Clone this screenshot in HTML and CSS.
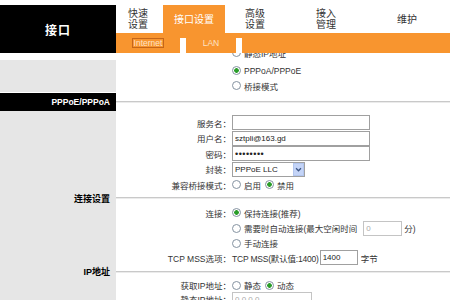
FILE: index.html
```html
<!DOCTYPE html>
<html lang="zh-CN">
<head>
<meta charset="utf-8">
<title>接口设置</title>
<link rel="stylesheet" href="styles.css">
</head>
<body>
<header class="top">
  <div class="brand">接口</div>
  <nav class="nav">
    <div class="tabs">
      <a class="tab t1">快速<br>设置</a>
      <a class="tab t2">接口设置</a>
      <a class="tab t3">高级<br>设置</a>
      <a class="tab t4">接入<br>管理</a>
      <a class="tab t5">维护</a>
    </div>
    <div class="subnav">
      <a class="sub sub-internet"><span class="sub-box">Internet</span></a>
      <span class="sep"></span>
      <a class="sub sub-lan">LAN</a>
      <span class="sep"></span>
    </div>
  </nav>
</header>
<main class="form">
  <div class="side side-top"></div>
  <div class="body body0">
    <div class="row"><span class="lbl"></span><label class="fld"><input class="radio" type="radio" name="wan">静态IP地址</label></div>
    <div class="row"><span class="lbl"></span><label class="fld"><input class="radio" type="radio" name="wan" checked>PPPoA/PPPoE</label></div>
    <div class="row"><span class="lbl"></span><label class="fld"><input class="radio" type="radio" name="wan">桥接模式</label></div>
  </div>

  <div class="side title title-dark">PPPoE/PPPoA</div>
  <div class="rule"><hr></div>

  <div class="side"></div>
  <div class="body body1">
    <div class="row tall"><span class="lbl">服务名：</span><span class="fld"><input class="txt w-long" type="text" value=""></span></div>
    <div class="row tall"><span class="lbl">用户名：</span><span class="fld"><input class="txt w-long" type="text" value="sztpli@163.gd"></span></div>
    <div class="row tall"><span class="lbl">密码：</span><span class="fld"><input class="txt w-long pwd" type="password" value="12345678"></span></div>
    <div class="row tall"><span class="lbl">封装：</span><span class="fld"><span class="select"><span class="select-val">PPPoE LLC</span><span class="select-btn"><svg viewBox="0 0 8 8" width="7" height="7"><path d="M1.2 2.6 L4 5.4 L6.8 2.6" fill="none" stroke="#3d5584" stroke-width="1.5"/></svg></span></span></span></div>
    <div class="row"><span class="lbl">兼容桥接模式：</span><span class="fld"><label class="opt"><input class="radio" type="radio" name="bridge">启用</label><label class="opt"><input class="radio" type="radio" name="bridge" checked>禁用</label></span></div>
  </div>

  <div class="side title">连接设置</div>
  <div class="rule"><hr></div>

  <div class="side"></div>
  <div class="body body2">
    <div class="row"><span class="lbl">连接：</span><label class="fld"><input class="radio" type="radio" name="conn" checked>保持连接(推荐)</label></div>
    <div class="row r16"><span class="lbl"></span><span class="fld"><label class="opt"><input class="radio" type="radio" name="conn">需要时自动连接(最大空闲时间</label><input class="txt w-idle" type="text" value="0"><span class="unit">分)</span></span></div>
    <div class="row r14"><span class="lbl"></span><label class="fld"><input class="radio" type="radio" name="conn">手动连接</label></div>
    <div class="row"><span class="lbl">TCP MSS选项：</span><span class="fld"><span class="mss">TCP MSS(默认值:1400)</span><input class="txt w-mss" type="text" value="1400"><span class="unit wide">字节</span></span></div>
  </div>

  <div class="side title">IP地址</div>
  <div class="rule"><hr></div>

  <div class="side"></div>
  <div class="body body3">
    <div class="row r14"><span class="lbl">获取IP地址：</span><span class="fld"><label class="opt"><input class="radio" type="radio" name="ip">静态</label><label class="opt"><input class="radio" type="radio" name="ip" checked>动态</label></span></div>
    <div class="row r14"><span class="lbl">静态IP地址：</span><span class="fld"><input class="txt w-ip" type="text" value="0.0.0.0"></span></div>
  </div>
</main>
</body>
</html>
```
FILE: styles.css
```css
* { box-sizing: border-box; }
html, body { margin: 0; padding: 0; }
body {
  width: 450px;
  height: 300px;
  overflow: hidden;
  background: #fff;
  padding-top: 5px;
  font-family: "Liberation Sans", "Noto Sans CJK SC", sans-serif;
  font-size: 8.5px;
  color: #333;
}

/* header */
.top { display: flex; height: 48px; }
.brand {
  width: 116px;
  background: #000;
  color: #fff;
  font-weight: bold;
  font-size: 12px;
  letter-spacing: 1px;
  display: flex;
  align-items: center;
  justify-content: center;
}
.nav { flex: 1; display: flex; flex-direction: column; }
.tabs { display: flex; height: 28px; }
.tab {
  display: flex;
  align-items: center;
  font-size: 10px;
  line-height: 11px;
  color: #333;
  text-decoration: none;
}
.t1 { width: 47px; padding-left: 12px; }
.t2 { width: 62px; justify-content: center; background: #f8952f; color: #fff; }
.t3 { width: 71px; padding-left: 20px; }
.t4 { width: 81px; padding-left: 20px; }
.t5 { flex: 1; padding-left: 20px; }

.subnav { height: 20px; background: #f8952f; display: flex; }
.sub {
  display: flex;
  align-items: center;
  justify-content: center;
  color: #fde3c6;
  font-size: 8.5px;
}
.sub-internet { width: 64px; }
.sub-box { border: 1px solid #c4661a; padding: 0 1px; line-height: 8px; }
.sub-lan { width: 50px; }
.sep { width: 6px; height: 15px; align-self: flex-end; background: #fff; }

/* form */
.form {
  display: grid;
  grid-template-columns: 116px 1fr;
  grid-template-rows: 40px 18px 81px 12px 61px 13px 1fr;
  height: 247px;
  overflow: hidden;
}
.side { background: #e6e6e6; }
.side-top { border-top: 7px solid #fff; border-bottom: 1px solid #fff; }
.title {
  display: flex;
  align-items: center;
  justify-content: flex-end;
  padding-right: 6px;
  font-weight: bold;
  font-size: 9px;
  color: #000;
}
.title-dark { background: #000; color: #fff; font-size: 8.5px; }

.rule { display: flex; align-items: center; }
.rule hr {
  flex: 1;
  margin: 0;
  height: 0;
  border: 0;
  border-top: 1px solid #c9c9c9;
  border-bottom: 1px solid #ebebeb;
}

.body0 .row:first-child { margin-top: -8px; margin-bottom: 3px; }
.body1 { padding-top: 4px; }
.body2 { padding-top: 1px; }

.row { display: flex; align-items: center; height: 15px; white-space: nowrap; }
.row.tall { height: 15.5px; }
.row.r16 { height: 16px; }
.row.r14 { height: 14px; }
.lbl { width: 115px; flex: none; text-align: right; }
.fld { display: flex; align-items: center; margin-left: 1px; }
.opt { display: inline-flex; align-items: center; margin-right: 4px; }
.mss { letter-spacing: -0.2px; }

.radio {
  -webkit-appearance: none;
  appearance: none;
  width: 9px;
  height: 9px;
  margin: 0 3px 0 0;
  border: 1px solid #8593a1;
  border-radius: 50%;
  background: #fff;
  flex: none;
}
.radio:checked { background: radial-gradient(circle, #2a9d2a 0 2px, #fff 2.6px); }

.txt {
  height: 15px;
  margin: 0;
  padding: 0 2px;
  border: 1px solid #a0a0a0;
  background: #fff;
  font: inherit;
  font-size: 8px;
  color: #222;
  outline: none;
}
.w-long { width: 138px; }
.pwd { font-size: 9px; letter-spacing: 0.5px; }
.w-idle { width: 39px; margin-left: 2px; color: #aaa; border-color: #c4c4c4; }
.w-mss { width: 38px; margin-left: 1px; }
.w-ip { width: 80px; color: #aaa; border-color: #c4c4c4; }
.unit { margin-left: 2px; }
.unit.wide { margin-left: 3px; }

.select {
  display: flex;
  width: 73px;
  height: 15px;
  border: 1px solid #a0a0a0;
  background: #fff;
}
.select-val {
  flex: 1;
  display: flex;
  align-items: center;
  padding-left: 2px;
  font-size: 8px;
  color: #222;
}
.select-btn {
  width: 11px;
  background: #c4d4f7;
  border: 1px solid #b3c6ee;
  display: flex;
  align-items: center;
  justify-content: center;
}
```
